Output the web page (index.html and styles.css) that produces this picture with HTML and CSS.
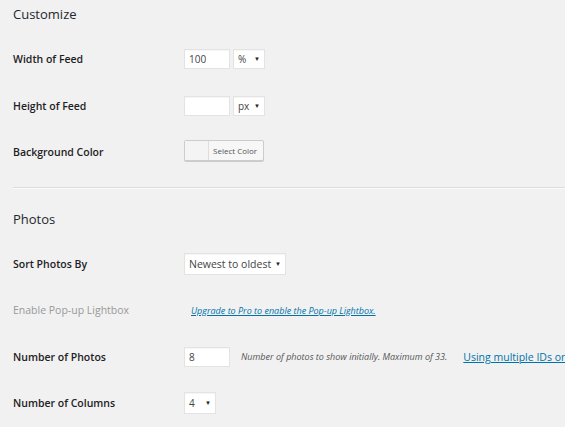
FILE: index.html
```html
<!DOCTYPE html>
<html>
<head>
<meta charset="utf-8">
<link rel="stylesheet" href="styles.css">
</head>
<body>
<div class="page">
  <h3 class="section-title first">Customize</h3>
  <div class="form">
    <div class="row">
      <div class="label">Width of Feed</div>
      <div class="field">
        <span class="input w46">100</span>
        <span class="select w32 after-input">% <i class="caret">▼</i></span>
      </div>
    </div>
    <div class="row">
      <div class="label">Height of Feed</div>
      <div class="field">
        <span class="input w46"></span>
        <span class="select w32 after-input">px <i class="caret">▼</i></span>
      </div>
    </div>
    <div class="row">
      <div class="label">Background Color</div>
      <div class="field">
        <span class="color-btn"><span class="swatch"></span><span class="color-text">Select Color</span></span>
      </div>
    </div>
  </div>
  <hr class="divider">
  <h3 class="section-title second">Photos</h3>
  <div class="form">
    <div class="row">
      <div class="label">Sort Photos By</div>
      <div class="field">
        <span class="select sort">Newest to oldest <i class="caret">▼</i></span>
      </div>
    </div>
    <div class="row">
      <div class="label disabled">Enable Pop-up Lightbox</div>
      <div class="field">
        <a class="upgrade" href="#">Upgrade to Pro to enable the Pop-up Lightbox.</a>
      </div>
    </div>
    <div class="row">
      <div class="label">Number of Photos</div>
      <div class="field">
        <span class="input w46">8</span>
        <span class="desc">Number of photos to show initially. Maximum of 33.</span>
        <a class="more" href="#">Using multiple IDs or hashtags?</a>
      </div>
    </div>
    <div class="row">
      <div class="label">Number of Columns</div>
      <div class="field">
        <span class="select w32 cols">4 <i class="caret">▼</i></span>
      </div>
    </div>
  </div>
</div>
</body>
</html>
```
FILE: styles.css
```css
html, body {
  margin: 0;
  padding: 0;
  background: #f1f1f1;
  overflow: hidden;
}
body {
  font-family: "Open Sans", "Noto Sans", sans-serif;
  color: #23282d;
  font-size: 10px;
}
.page {
  padding-left: 13px;
  width: 800px;
}
.section-title {
  margin: 0;
  font-size: 13px;
  font-weight: 500;
  color: #23282d;
  line-height: 18px;
  height: 20px;
}
.section-title.first {
  padding-top: 5px;
}
.section-title.second {
  padding-top: 21px;
}
.form {
  display: flex;
  flex-direction: column;
}
.row {
  display: flex;
  align-items: center;
  height: 46.5px;
}
.form .row:first-child {
  margin-top: 11px;
}
.label {
  width: 171px;
  flex: none;
  font-weight: 600;
  font-size: 10.5px;
  color: #1d2125;
}
.label.disabled {
  color: #999;
  font-weight: 500;
}
.field {
  display: flex;
  align-items: center;
  white-space: nowrap;
}
.input, .select {
  box-sizing: border-box;
  height: 20px;
  background: #fff;
  border: 1px solid #e3e3e3;
  box-shadow: inset 0 1px 1px rgba(0,0,0,0.04);
  font-size: 10px;
  color: #444;
  display: inline-flex;
  align-items: center;
  padding: 0 4px;
}
.w46 { width: 46px; }
.w32 { width: 32px; justify-content: space-between; }
.after-input { margin-left: 3px; }
.cols { height: 22px; }
.select.sort { width: 102px; height: 22px; font-size: 10.5px; justify-content: space-between; }
.caret {
  font-style: normal;
  font-size: 6px;
  color: #222;
}
.color-btn {
  box-sizing: border-box;
  display: inline-flex;
  height: 21px;
  width: 80px;
  border: 1px solid #ccc;
  border-radius: 2px;
  background: #f7f7f7;
  box-shadow: 0 1px 0 #ccc;
  margin-top: -4px;
}
.swatch {
  width: 23px;
  border-right: 1px solid #ddd;
  background: #f4f4f4;
}
.color-text {
  font-size: 8px;
  color: #555;
  display: flex;
  align-items: center;
  padding-left: 4px;
}
.divider {
  margin: 11px 0 0 0;
  border: 0;
  border-top: 1px solid #ddd;
  border-bottom: 1px solid #fafafa;
  height: 0;
}
.upgrade {
  margin-left: 7px;
  color: #0073aa;
  font-style: italic;
  font-size: 9px;
  text-decoration: underline;
}
.desc {
  margin-left: 11px;
  font-style: italic;
  font-size: 9px;
  color: #555;
}
.more {
  margin-left: 16px;
  color: #0073aa;
  font-size: 10.5px;
  text-decoration: underline;
}
```
